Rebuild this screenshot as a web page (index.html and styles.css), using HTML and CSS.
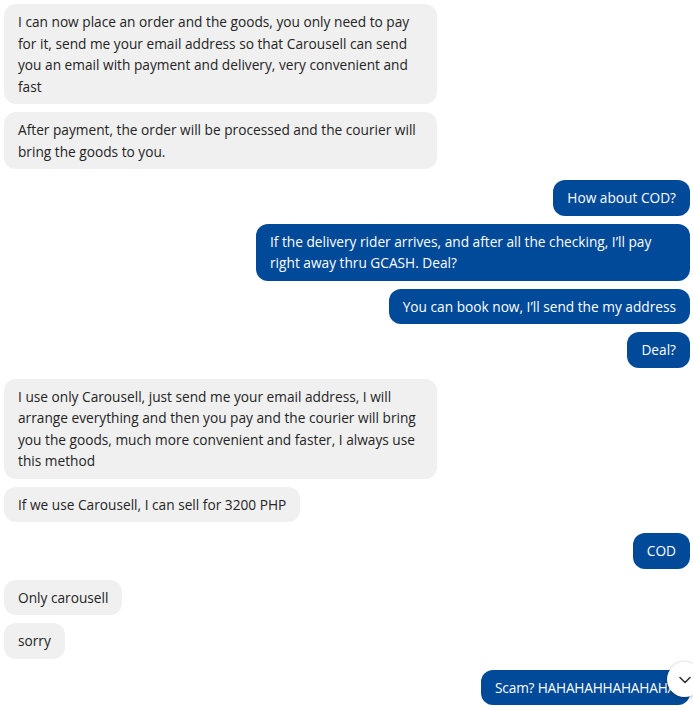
FILE: index.html
```html
<!DOCTYPE html>
<html lang="en">
<head>
<meta charset="utf-8">
<link rel="stylesheet" href="styles.css">
</head>
<body>
<div class="chat">
  <div class="group in">
    <div class="msg w1">I can now place an order and the goods, you only need to pay for it, send me your email address so that Carousell can send you an email with payment and delivery, very convenient and fast</div>
    <div class="msg w1">After payment, the order will be processed and the courier will bring the goods to you.</div>
  </div>
  <div class="group out">
    <div class="msg">How about COD?</div>
    <div class="msg w2">If the delivery rider arrives, and after all the checking, I’ll pay right away thru GCASH. Deal?</div>
    <div class="msg">You can book now, I’ll send the my address</div>
    <div class="msg">Deal?</div>
  </div>
  <div class="group in">
    <div class="msg w1">I use only Carousell, just send me your email address, I will arrange everything and then you pay and the courier will bring you the goods, much more convenient and faster, I always use this method</div>
    <div class="msg">If we use Carousell, I can sell for 3200 PHP</div>
  </div>
  <div class="group out">
    <div class="msg">COD</div>
  </div>
  <div class="group in">
    <div class="msg">Only carousell</div>
    <div class="msg">sorry</div>
  </div>
  <div class="group out">
    <div class="msg scam">Scam? HAHAHAHHAHAHAHA</div>
  </div>
</div>
<button class="scroll-down" aria-label="Scroll down">
  <svg width="16" height="16" viewBox="0 0 16 16"><path d="M3 5.5 L8 10.5 L13 5.5" fill="none" stroke="#333" stroke-width="1.6" stroke-linecap="round" stroke-linejoin="round"/></svg>
</button>
</body>
</html>
```
FILE: styles.css
```css
html, body {
  margin: 0;
  padding: 0;
  background: #ffffff;
  overflow: hidden;
}
body {
  font-family: "Open Sans", "Noto Sans", sans-serif;
  font-size: 13.7px;
  line-height: 21.5px;
  color: #242424;
}
.chat {
  display: flex;
  flex-direction: column;
  gap: 11px;
  padding: 4px 3px 0 4px;
}
.group {
  display: flex;
  flex-direction: column;
  gap: 8px;
}
.group.in { align-items: flex-start; }
.group.out { align-items: flex-end; }
.msg {
  padding: 7px 14px;
  border-radius: 12px;
  box-sizing: border-box;
}
.in .msg {
  background: #f0f0f0;
  color: #242424;
}
.out .msg {
  background: #004a99;
  color: #ffffff;
}
.scam { letter-spacing: -0.2px; }
.w1 { width: 433px; }
.w2 { width: 434px; }
.scroll-down {
  position: fixed;
  left: 667px;
  top: 662px;
  width: 35px;
  height: 35px;
  border-radius: 50%;
  border: none;
  background: #ffffff;
  box-shadow: 0 1px 4px rgba(0,0,0,0.3);
  display: flex;
  align-items: center;
  justify-content: center;
  padding: 0;
}
```
